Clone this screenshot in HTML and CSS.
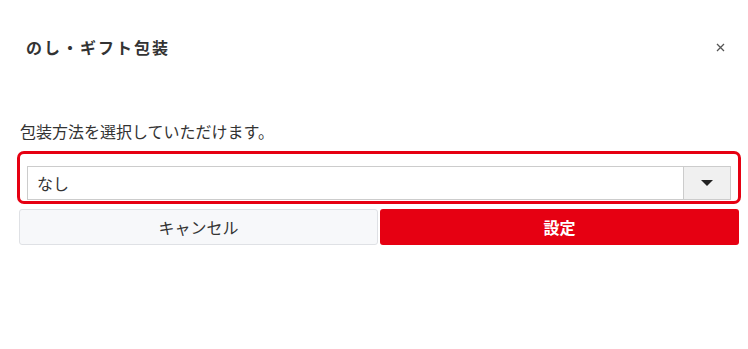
FILE: index.html
```html
<!DOCTYPE html>
<html lang="ja">
<head>
    <meta charset="UTF-8">
    <meta name="viewport" content="width=device-width, initial-scale=1.0">
    <title>のし・ギフト包装</title>
    <link rel="stylesheet" href="styles.css">
</head>
<body>
    <div class="dialog">
        <div class="dialog-header">
            <h2 class="dialog-title">のし・ギフト包装</h2>
            <button class="close-button" type="button" aria-label="閉じる">
                <svg width="9" height="9" viewBox="0 0 9 9">
                    <path d="M1 1 L8 8 M8 1 L1 8" stroke="#555" stroke-width="1.3" fill="none"/>
                </svg>
            </button>
        </div>

        <p class="lead">包装方法を選択していただけます。</p>

        <div class="select-ring">
            <div class="select-box">
                <span class="select-value">なし</span>
                <span class="select-arrow">
                    <svg width="12" height="7" viewBox="0 0 12 7">
                        <path d="M0 0 L12 0 L6 6 Z" fill="#222"/>
                    </svg>
                </span>
            </div>
        </div>

        <div class="actions">
            <button class="cancel-button" type="button">キャンセル</button>
            <button class="submit-button" type="button">設定</button>
        </div>
    </div>
</body>
</html>
```

FILE: styles.css
```css
body {
    margin: 0;
    font-family: 'Noto Sans CJK JP', 'Noto Sans', sans-serif;
    color: #333;
    background-color: #fff;
}

.dialog {
    padding: 35px 9px 0 19px;
}

.dialog-header {
    display: flex;
    justify-content: space-between;
    align-items: center;
    height: 24px;
}

.dialog-title {
    margin: 0 0 0 7px;
    font-size: 16px;
    font-weight: bold;
    letter-spacing: 2px;
    line-height: 24px;
    color: #333;
}

.close-button {
    display: flex;
    align-items: center;
    justify-content: center;
    width: 20px;
    height: 20px;
    margin-right: 9px;
    padding: 0;
    border: none;
    background: transparent;
    cursor: pointer;
}

.lead {
    margin: 61px 0 0 1px;
    font-size: 16px;
    line-height: 22px;
}

.select-ring {
    margin: 9px -2px 0 -2px;
    padding: 12px 7px 1px;
    border: 3px solid #e60012;
    border-radius: 7px;
}

.select-box {
    display: flex;
    height: 34px;
    border: 1px solid #ccc;
    box-sizing: border-box;
    background-color: #fff;
}

.select-value {
    flex: 1;
    padding-left: 9px;
    font-size: 16px;
    line-height: 32px;
}

.select-arrow {
    display: flex;
    align-items: center;
    justify-content: center;
    width: 46px;
    border-left: 1px solid #ccc;
    background-color: #f0f0f0;
}

.actions {
    display: grid;
    grid-template-columns: 1fr 1fr;
    gap: 2px;
    margin-top: 5px;
}

.cancel-button, .submit-button {
    height: 36px;
    border-radius: 3px;
    font-family: inherit;
    font-size: 16px;
    cursor: pointer;
}

.cancel-button {
    border: 1px solid #dfe1e5;
    background-color: #f7f8fa;
    color: #333;
}

.submit-button {
    border: none;
    background-color: #e60012;
    color: #fff;
    font-weight: bold;
}
```
